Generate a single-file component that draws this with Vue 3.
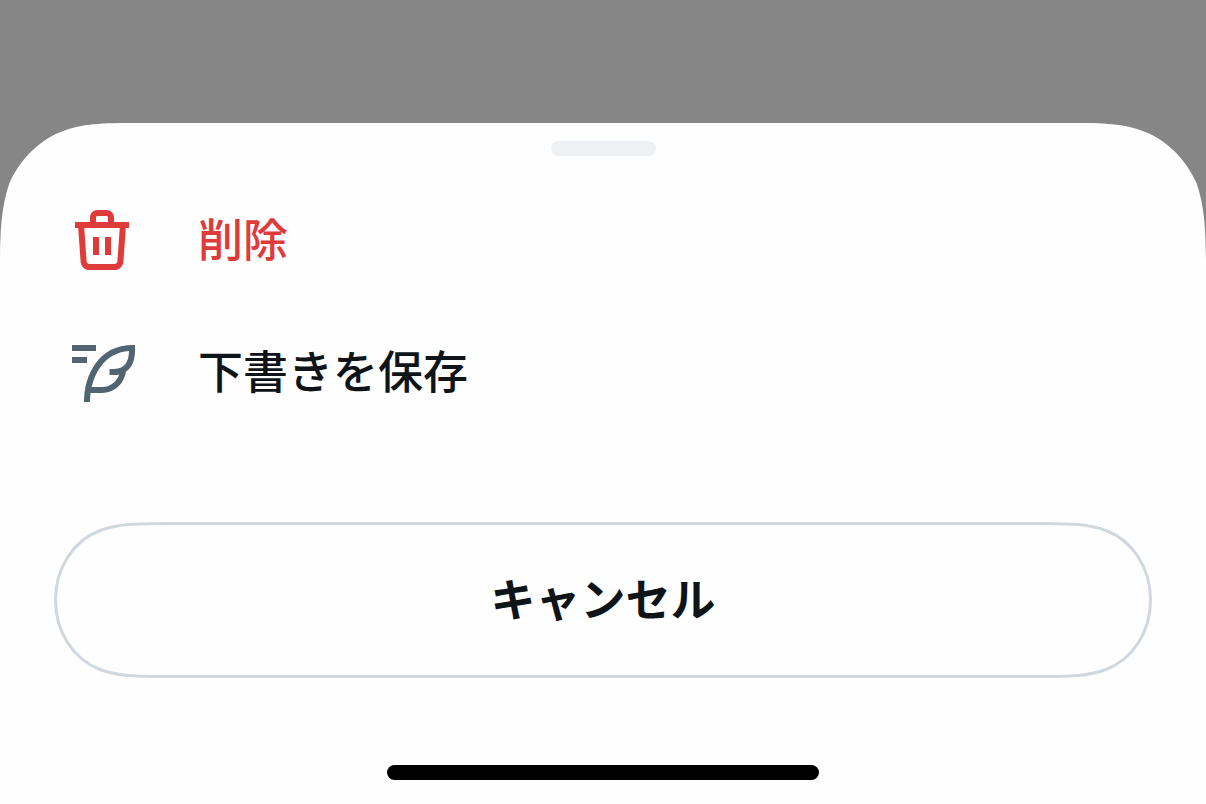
<script setup>
const actions = [
  {
    id: 'delete',
    label: '削除',
    danger: true,
    icon: 'M16 6V4.5C16 3.12 14.88 2 13.5 2h-3C9.11 2 8 3.12 8 4.5V6H3v2h1.06l.81 11.21C4.98 20.78 6.28 22 7.86 22h8.27c1.58 0 2.88-1.22 3-2.79L19.93 8H21V6h-5zm-6-1.5c0-.28.22-.5.5-.5h3c.27 0 .5.22.5.5V6h-4V4.5zm7.13 14.57c-.04.52-.47.93-1 .93H7.86c-.53 0-.96-.41-1-.93L6.07 8h11.85l-.79 11.07zM9 17v-6h2v6H9zm4 0v-6h2v6h-2z',
  },
  {
    id: 'save-draft',
    label: '下書きを保存',
    danger: false,
    icon: 'M23 3c-6.62-.1-10.38 2.42-13.05 6.03C7.29 12.61 6 17.33 6 22h2c0-1.01.07-2.01.19-3H12c4.1 0 7.48-3.08 7.94-7.05C22.79 10.15 23.17 6.36 23 3zm-7 8h-1.5v2H16c.63-.02 1.2-.08 1.72-.19C16.95 15.24 14.68 17 12 17H8.55c.57-2.51 1.57-4.85 3-6.78 2.16-2.91 5.29-4.91 9.45-5.19C20.95 8.08 19.9 11 16 11zM2 3h8v2H2V3zm0 4h5v2H2V7z',
  },
]
</script>

<template>
  <div class="screen">
    <main class="sheet">
      <svg class="corner corner-left" viewBox="0 0 144 144" aria-hidden="true">
        <path d="M0 0H144C106 0 86 0 66 7C41 15 20 36 9.500 60C2 82 0 104 0 144Z" />
      </svg>
      <svg class="corner corner-right" viewBox="0 0 144 144" aria-hidden="true">
        <path d="M144 0H0C38 0 58 0 78 7C103 15 124 36 134.500 60C142 82 144 104 144 144Z" />
      </svg>

      <div class="handle"></div>

      <div class="actions">
        <button
          v-for="action in actions"
          :key="action.id"
          type="button"
          class="action"
          :class="{ danger: action.danger }"
        >
          <svg class="icon" viewBox="0 0 24 24" aria-hidden="true">
            <path :d="action.icon" />
          </svg>
          <span class="label">{{ action.label }}</span>
        </button>
      </div>

      <button type="button" class="cancel">
        <svg class="cap" viewBox="0 0 120 156" aria-hidden="true">
          <path d="M120 1.5C80 1.5 63 2 46 8.500C19 19 1.5 46 1.5 78C1.5 110 19 137 46 147.500C63 154 80 154.500 120 154.500" />
        </svg>
        <span class="cancel-label">キャンセル</span>
        <svg class="cap" viewBox="0 0 120 156" aria-hidden="true">
          <path d="M0 1.5C40 1.5 57 2 74 8.500C101 19 118.500 46 118.500 78C118.500 110 101 137 74 147.500C57 154 40 154.500 0 154.500" />
        </svg>
      </button>

      <div class="home-indicator"></div>
    </main>
  </div>
</template>

<style>
body {
  margin: 0;
  background: #868686;
}
</style>

<style scoped>
.screen {
  display: flex;
  flex-direction: column;
  justify-content: flex-end;
  min-height: 100vh;
  background: #868686;
  font-family: "Noto Sans CJK JP", sans-serif;
}

.sheet {
  position: relative;
  display: flex;
  flex-direction: column;
  padding: 18px 0 24px;
  background: #fefefe;
}

.corner {
  position: absolute;
  top: 0;
  width: 144px;
  height: 144px;
  fill: #868686;
  pointer-events: none;
}

.corner-left {
  left: 0;
}

.corner-right {
  right: 0;
}

.handle {
  align-self: center;
  width: 105px;
  height: 15px;
  border-radius: 8px;
  background: #edf1f3;
}

.actions {
  display: flex;
  flex-direction: column;
  margin-top: 18px;
}

button {
  margin: 0;
  padding: 0;
  border: 0;
  background: none;
  font-family: inherit;
  color: #0f1419;
  cursor: pointer;
}

.action {
  display: flex;
  align-items: center;
  gap: 60px;
  height: 132px;
  padding: 0 66px;
  text-align: left;
}

.icon {
  flex: none;
  width: 72px;
  height: 72px;
  fill: #536471;
}

.label {
  padding-bottom: 4px;
  font-size: 45px;
  line-height: 60px;
  font-weight: 500;
}

.danger .icon {
  fill: #df3b3b;
}

.danger .label {
  color: #df3b3b;
}

.cancel {
  display: flex;
  height: 156px;
  margin: 84px 54px 0;
}

.cap {
  flex: none;
  width: 120px;
  height: 156px;
  fill: none;
  stroke: #cfd8dd;
  stroke-width: 3;
}

.cancel-label {
  flex: 1;
  box-sizing: border-box;
  height: 156px;
  border: solid #cfd8dd;
  border-width: 3px 0;
  font-size: 45px;
  line-height: 146px;
  font-weight: 700;
  text-align: center;
}

.home-indicator {
  align-self: center;
  width: 432px;
  height: 15px;
  margin-top: 87px;
  border-radius: 8px;
  background: #000;
}
</style>
